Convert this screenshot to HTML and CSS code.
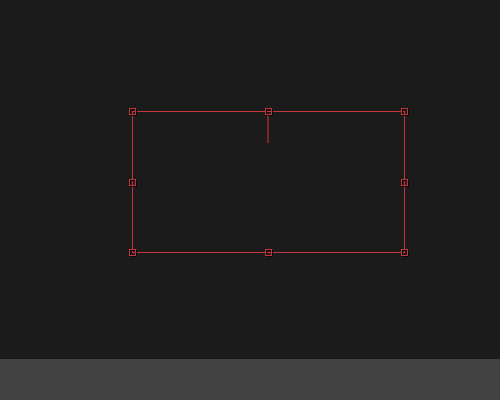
FILE: index.html
```html
<!DOCTYPE html>
<html>
<head>
<meta charset="utf-8">
<link rel="stylesheet" href="styles.css">
</head>
<body>
<div class="app">
  <div class="canvas">
    <svg class="sel" width="500" height="359" viewBox="0 0 500 359" xmlns="http://www.w3.org/2000/svg">
      <line x1="268" y1="114" x2="268" y2="143" stroke="#7a2626" stroke-width="2"/>
      <rect x="132.5" y="111.5" width="272" height="141" fill="none" stroke="#c4343a" stroke-width="1"/>
      <g fill="none" stroke="#0a0a0a" stroke-width="1">
        <rect x="130.5" y="109.5" width="6" height="6"/>
        <rect x="266.5" y="109.5" width="6" height="6"/>
        <rect x="402.5" y="109.5" width="6" height="6"/>
        <rect x="130.5" y="180.5" width="6" height="6"/>
        <rect x="402.5" y="180.5" width="6" height="6"/>
        <rect x="130.5" y="250.5" width="6" height="6"/>
        <rect x="266.5" y="250.5" width="6" height="6"/>
        <rect x="402.5" y="250.5" width="6" height="6"/>
      </g>
      <g fill="none" stroke="#c4343a" stroke-width="1">
        <rect x="129.5" y="108.5" width="6" height="6"/>
        <rect x="265.5" y="108.5" width="6" height="6"/>
        <rect x="401.5" y="108.5" width="6" height="6"/>
        <rect x="129.5" y="179.5" width="6" height="6"/>
        <rect x="401.5" y="179.5" width="6" height="6"/>
        <rect x="129.5" y="249.5" width="6" height="6"/>
        <rect x="265.5" y="249.5" width="6" height="6"/>
        <rect x="401.5" y="249.5" width="6" height="6"/>
      </g>
    </svg>
  </div>
  <div class="statusbar"></div>
</div>
</body>
</html>
```
FILE: styles.css
```css
html, body {
  margin: 0;
  padding: 0;
  background: #1b1b1b;
}
.app {
  width: 500px;
  height: 400px;
  display: flex;
  flex-direction: column;
}
.canvas {
  height: 359px;
  background: #1b1b1b;
}
.sel {
  display: block;
}
.statusbar {
  flex: 1;
  background: #424242;
}
```
